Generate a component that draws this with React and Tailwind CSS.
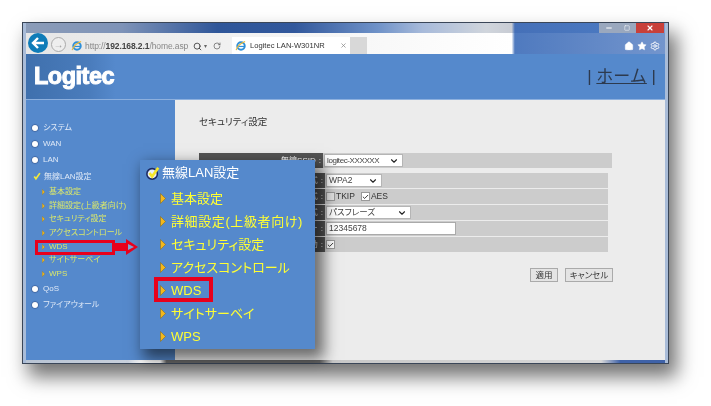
import React from 'react';
import { Home, Star, Settings, Search, RotateCw, X, Minus, Square, ChevronDown, Check } from 'lucide-react';

const sideTop = ['システム', 'WAN', 'LAN'];
const subItems = ['基本設定', '詳細設定(上級者向け)', 'セキュリティ設定', 'アクセスコントロール', 'WDS', 'サイトサーベイ', 'WPS'];
const jp = { fontFamily: '"Liberation Sans", "Noto Sans CJK JP", sans-serif' };

function IeIcon({ size = 14 }) {
  return (
    <svg width={size} height={size} viewBox="0 0 16 16" className="shrink-0">
      <circle cx="8" cy="8" r="5" fill="none" stroke="#2f8fd8" strokeWidth="2.6" />
      <path d="M4 8.6h8.5" stroke="#2f8fd8" strokeWidth="1.6" />
      <path d="M1.5 13.5C3 9 8 4 13.5 2" fill="none" stroke="#e9b93a" strokeWidth="1.6" />
    </svg>
  );
}

function Bullet() {
  return <span className="h-[6px] w-[6px] shrink-0 rounded-full bg-white shadow-[0_0_1px_0.5px_#2f4f86]" />;
}

function CheckMark({ size = 10, ring = false }) {
  return (
    <svg width={size} height={size} viewBox="0 0 16 16" className="shrink-0">
      {ring && <circle cx="7" cy="9" r="6" fill="#e8eef8" stroke="#1c2a63" strokeWidth="1.8" />}
      <path d="M4 8l3 4 7-10" fill="none" stroke={ring ? '#f5e62a' : '#f2ea3a'} strokeWidth="3" />
    </svg>
  );
}

function Arrow({ w, h }) {
  return (
    <svg width={w} height={h} viewBox="0 0 6 10" preserveAspectRatio="none" className="shrink-0">
      <path d="M0.5 0.5L5.5 5L0.5 9.5Z" fill="#f4b81c" stroke="#8a6a10" strokeWidth="0.5" />
    </svg>
  );
}

function FakeSelect({ width, text, textClass = '' }) {
  return (
    <div className={`flex h-[13px] items-center justify-between whitespace-nowrap border border-[#b5b5b5] bg-white pl-[2px] pr-[3px] text-[8.5px] text-[#444] [font-feature-settings:'palt'] ${width}`}>
      <span className={textClass}>{text}</span>
      <ChevronDown size={10} strokeWidth={2.6} className="text-[#222]" />
    </div>
  );
}

function FormRow({ label, children, w = 'w-[126px]' }) {
  return (
    <div className="flex h-[15px] bg-[#cccccc]">
      <div className={`flex shrink-0 items-center justify-end whitespace-nowrap bg-[#555555] pr-[2px] text-[8px] text-white ${w}`}>
        {label}<span className="ml-[3px]">:</span>
      </div>
      <div className="flex items-center pl-[1px]">{children}</div>
    </div>
  );
}

function SmallBox({ checked }) {
  return (
    <span className={`flex h-[9px] w-[9px] items-center justify-center border border-[#999] ${checked ? 'bg-white' : 'bg-[#e4e4e4]'}`}>
      {checked && <Check size={8} strokeWidth={3} className="text-[#222]" />}
    </span>
  );
}

export default function App() {
  return (
    <div style={jp} className="h-[406px] w-[711px] overflow-hidden bg-white pl-[23px] pt-[23px]">
      <div className="relative flex h-[340px] w-[645px] flex-col border-x-[3px] border-x-[#a9bcd8] shadow-[7px_12px_18px_2px_rgba(0,0,0,0.55)] outline outline-1 outline-[#3a4658] blur-[0.35px]">
        {/* browser chrome */}
        <div className="flex h-[31px] shrink-0 flex-col bg-[linear-gradient(90deg,#e6e6e6_0%,#f4f4f4_40%,#ffffff_76%,#4f7abf_76.5%,#7395cd_100%)]">
          <div className="flex h-[10px] shrink-0 justify-end bg-[linear-gradient(90deg,#8b9cb8_0%,#7e93b8_15%,#2f5699_30%,#32589c_42%,#6f92c8_55%,#a7bada_62%,#d0d5dc_72%,#c8ccd4_76%,#4570b8_76.5%,#4a78c0_90%,#7e9ccc_100%)]">
            <div className="mr-[1px] flex h-[10px]">
              <div className="flex w-[19px] items-center justify-center bg-[#9aa8be]"><Minus size={8} strokeWidth={3} className="text-white" /></div>
              <div className="flex w-[18px] items-center justify-center bg-[#9aa8be]"><Square size={6} strokeWidth={2} className="text-white" /></div>
              <div className="flex w-[28px] items-center justify-center bg-[#c8403a]"><X size={8} strokeWidth={3.5} className="text-white" /></div>
            </div>
          </div>
          <div className="flex min-h-0 flex-1 items-end pl-[2px]">
            <div className="mb-[1px] flex h-[20px] w-[20px] shrink-0 items-center justify-center rounded-full bg-[#0f7cb8]">
              <svg width="14" height="12" viewBox="0 0 14 12">
                <path d="M13 6H3M7 1L2 6l5 5" fill="none" stroke="#fff" strokeWidth="2.4" />
              </svg>
            </div>
            <div className="mb-[2px] ml-[3px] flex h-[15px] w-[15px] shrink-0 items-center justify-center rounded-full border border-[#aaa] bg-[#eee] text-[10px] leading-none text-[#999]">→</div>
            <div className="ml-[2px] flex h-[16px] w-[162px] shrink-0 items-center gap-[2px] whitespace-nowrap pl-[3px] text-[8.5px] text-[#888]">
              <IeIcon size={12} />
              <span className="tracking-[-0.1px]">http://<span className="font-bold text-[#444]">192.168.2.1</span>/home.asp</span>
              <Search size={9} strokeWidth={2.4} className="ml-[3px] text-[#444]" />
              <span className="text-[6px] text-[#666]">▾</span>
              <RotateCw size={8} className="ml-[4px] text-[#555]" />
            </div>
            <div className="ml-[2px] flex h-[17px] w-[118px] shrink-0 items-center gap-[3px] whitespace-nowrap bg-white pl-[3px] text-[7.6px] text-[#333]">
              <IeIcon size={12} />
              <span>Logitec LAN-W301NR</span>
              <X size={7} strokeWidth={2.5} className="ml-auto mr-[3px] text-[#888]" />
            </div>
            <div className="h-[17px] w-[17px] shrink-0 bg-[#d8d8d8]" />
            <div className="mb-[3px] ml-auto mr-[5px] flex items-center gap-[3px]">
              <Home size={10} fill="#fff" strokeWidth={1} className="text-white" />
              <Star size={10} fill="#fff" strokeWidth={1} className="text-white" />
              <Settings size={10} strokeWidth={2.2} className="text-white" />
            </div>
          </div>
        </div>

        {/* page header */}
        <div className="flex h-[45px] shrink-0 items-center justify-between bg-[linear-gradient(90deg,#3f70ad_0%,#4a7cbc_10%,#5589cc_14%,#5589cc_100%)] pl-[8px] pr-[9px]">
          <span style={{ fontFamily: '"Liberation Sans", sans-serif' }} className="text-[23.5px] font-bold leading-none tracking-[-0.5px] text-white [-webkit-text-stroke:1px_#fff]">Logitec</span>
          <span className="text-[17px] text-[#2d3a4e]">| <span className="underline">ホーム</span> |</span>
        </div>

        {/* page body */}
        <div className="flex min-h-0 flex-1 border-t border-[#8db0de]">
          <nav className="w-[149px] shrink-0 whitespace-nowrap bg-[#5589cc] pl-[6px] pt-[20px] text-[8px] text-[#dfe9f7] [font-feature-settings:'palt']">
            {sideTop.map((item) => (
              <div key={item} className="flex h-[16px] items-center gap-[5px]"><Bullet />{item}</div>
            ))}
            <div className="flex h-[17px] items-center gap-[3px]"><CheckMark size={9} />無線LAN設定</div>
            {subItems.map((item) => (
              <div key={item} className="flex h-[13.7px] items-center gap-[4px] pl-[10px] text-[#dbe86a]">
                <Arrow w={3} h={6} />{item}
              </div>
            ))}
            <div className="flex h-[16px] items-center gap-[5px]"><Bullet />QoS</div>
            <div className="flex h-[16px] items-center gap-[5px]"><Bullet />ファイアウォール</div>
          </nav>

          <main className="min-w-0 flex-1 bg-[#ececec] pl-[24px] pt-[15px]">
            <h1 className="h-[38px] text-[9.5px] font-normal leading-[13px] text-[#333] [font-feature-settings:'palt']">セキュリティ設定</h1>
            <div className="w-[413px]">
              <FormRow label="無線SSID" w="w-[124px]">
                <FakeSelect width="w-[79px]" text="logitec-XXXXXX" textClass="text-[8px] tracking-[-0.4px]" />
              </FormRow>
            </div>
            <div className="mt-[5px] flex w-[409px] flex-col gap-[1px]">
              <FormRow label="認証方式"><FakeSelect width="w-[56px]" text="WPA2" /></FormRow>
              <FormRow label="暗号化方式">
                <span className="flex items-center gap-[1px] text-[8.5px] text-[#333]">
                  <SmallBox />TKIP
                  <span className="ml-[5px]"><SmallBox checked /></span>AES
                </span>
              </FormRow>
              <FormRow label="キー形式"><FakeSelect width="w-[85px]" text="パスフレーズ" /></FormRow>
              <FormRow label="キー">
                <div className="flex h-[13px] w-[130px] items-center border border-[#aaa] bg-white pl-[2px] text-[8.5px] text-[#444]">12345678</div>
              </FormRow>
              <FormRow label="有効"><SmallBox checked /></FormRow>
            </div>
            <div className="mt-[16px] flex w-[414px] justify-end gap-[7px]">
              <button className="h-[14px] w-[28px] border border-[#aaa] bg-[#e4e4e4] text-[8.5px] leading-none text-[#333]">適用</button>
              <button className="h-[14px] w-[48px] border border-[#aaa] bg-[#e4e4e4] text-[8.5px] leading-none text-[#333] [font-feature-settings:'palt']">キャンセル</button>
            </div>
          </main>
        </div>

        {/* window bottom edge */}
        <div className="h-[3px] shrink-0 bg-[linear-gradient(90deg,#b8c4d4_0%,#c8d0dc_16%,#ffffff_18%,#ffffff_21%,#666666_22%,#666666_46%,#c8c8c8_48%,#d8d8d8_90%,#3f62a8_93%,#3f62a8_100%)]" />

        {/* callout lying over the page */}
        <div className="absolute left-[114px] top-[137px] flex h-[189px] w-[175px] flex-col whitespace-nowrap bg-[#5589cc] pl-[6px] pt-[1px] shadow-[6px_7px_14px_3px_rgba(0,0,0,0.55)] [font-feature-settings:'palt']">
          <div className="flex h-[23px] items-center gap-[2px] text-[13px] text-white"><CheckMark size={14} ring />無線LAN設定</div>
          <div className="mt-[3px] flex flex-col">
            {subItems.map((item) => (
              <div key={item} className={`flex h-[23px] items-center gap-[5px] pl-[14px] text-[13px] text-[#ffff33] ${item.startsWith('詳細') ? 'tracking-[0.6px]' : ''}`}>
                <Arrow w={6} h={11} />{item}
              </div>
            ))}
          </div>
        </div>

        {/* red highlights */}
        <div className="absolute left-[9px] top-[217px] h-[15px] w-[80px] border-[3px] border-[#e8001c]" />
        <div className="absolute left-[128px] top-[254px] h-[25px] w-[59px] border-[4px] border-[#e8001c]" />
        <svg className="absolute left-[89px] top-[215px]" width="24" height="18" viewBox="0 0 24 18">
          <path d="M0 5h11V1l12 8-12 8v-4H0z" fill="#e8001c" />
          <path d="M13 6l6 3-6 3z" fill="#7fa0d0" />
        </svg>
      </div>
    </div>
  );
}
